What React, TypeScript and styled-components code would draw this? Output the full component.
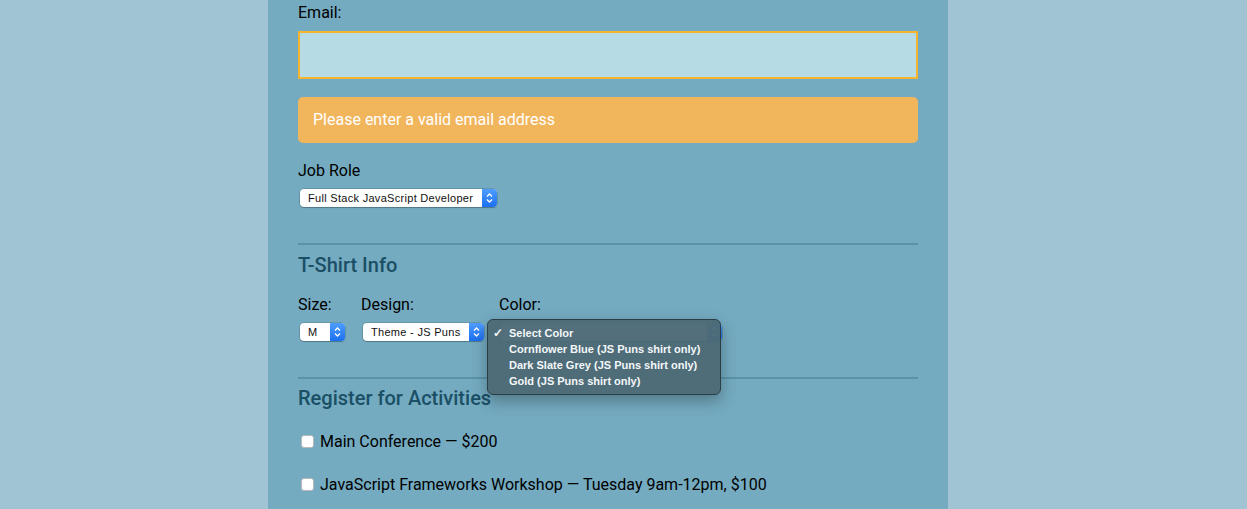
import React from 'react';
import styled, { createGlobalStyle } from 'styled-components';

const GlobalStyle = createGlobalStyle`
  html, body {
    margin: 0;
    padding: 0;
    background-color: #a0c4d4;
    font-family: 'Roboto', 'Liberation Sans', Arial, sans-serif;
  }
`;

const Page = styled.div`
  display: flex;
  justify-content: center;
  padding-right: 31px;
  min-height: 509px;
  overflow: hidden;
`;

const Form = styled.form`
  width: 620px;
  padding: 3px 30px 0;
  background-color: #74abc0;
  min-height: 506px;
`;

const Label = styled.label<{ gap?: number }>`
  display: block;
  margin-top: ${p => p.gap || 0}px;
  font-size: 16px;
  line-height: 19px;
  color: #000;
`;

const EmailInput = styled.input`
  display: block;
  box-sizing: border-box;
  width: 100%;
  height: 48px;
  margin: 9px 0 18px;
  background-color: #b6dbe5;
  border: 2px solid #f5b42e;
  outline: none;
`;

const Alert = styled.div`
  height: 46px;
  line-height: 46px;
  padding: 0 15px;
  border-radius: 5px;
  background-color: #f1b55c;
  color: #fff;
  font-size: 16px;
`;

const Divider = styled.hr<{ top: number }>`
  border: none;
  height: 2px;
  background-color: #5a93a8;
  margin: ${p => p.top}px 0 0;
`;

const Heading = styled.h2<{ gap: number }>`
  margin: ${p => p.gap}px 0 0;
  font-size: 20px;
  line-height: 24px;
  font-weight: 500;
  color: #1b4f66;
`;

const SelectBox = styled.div<{ width: number }>`
  display: flex;
  align-items: center;
  box-sizing: border-box;
  width: ${p => p.width}px;
  height: 18px;
  margin: 9px 0 0 2px;
  background: #fff;
  border-radius: 4px;
  box-shadow: 0 0 0 0.5px rgba(0, 0, 0, 0.25), 0 1px 1px rgba(0, 0, 0, 0.2);
  font-family: 'Liberation Sans', Arial, sans-serif;
  font-size: 11px;
  letter-spacing: 0.3px;
  color: #111;
  overflow: hidden;
`;

const SelectText = styled.span`
  flex: 1;
  padding-left: 8px;
  white-space: nowrap;
`;

const ArrowBox = styled.span`
  display: flex;
  align-items: center;
  justify-content: center;
  width: 15px;
  height: 100%;
  background: linear-gradient(#4f9dff, #1a6ff0);
`;

const ShirtRow = styled.div`
  display: grid;
  grid-template-columns: 63px 138px 1fr;
  margin-top: 18px;
`;

const Column = styled.div`
  position: relative;
`;

const Menu = styled.div`
  position: absolute;
  left: -12px;
  top: 24px;
  width: 232px;
  padding: 5px 0;
  background-color: rgba(76, 106, 119, 0.97);
  border: 1px solid #2b3d46;
  border-radius: 6px;
  box-shadow: 0 6px 16px rgba(0, 0, 0, 0.3);
  font-family: 'Liberation Sans', Arial, sans-serif;
  font-size: 11px;
  font-weight: 700;
  color: #f4f7f8;
  z-index: 2;
`;

const MenuItem = styled.div`
  display: flex;
  height: 16px;
  line-height: 16px;
  white-space: nowrap;
`;

const Check = styled.span`
  width: 21px;
  padding-left: 5px;
  box-sizing: border-box;
  font-size: 12px;
`;

const Activity = styled.label<{ gap: number }>`
  display: flex;
  align-items: center;
  gap: 6px;
  margin-top: ${p => p.gap}px;
  font-size: 16px;
  line-height: 19px;
`;

const CheckBox = styled.input`
  appearance: none;
  width: 13px;
  height: 13px;
  margin: 0 0 0 3px;
  background: #fff;
  border: 1px solid #b9b9b9;
  border-radius: 3px;
`;

const Chevrons = () => (
  <svg width="7" height="10" viewBox="0 0 7 10">
    <path d="M1 3.5 L3.5 1 L6 3.5 M1 6.5 L3.5 9 L6 6.5" fill="none" stroke="#fff" strokeWidth="1.3" />
  </svg>
);

const FakeSelect = ({ value, width }: { value: string; width: number }) => (
  <SelectBox width={width}>
    <SelectText>{value}</SelectText>
    <ArrowBox><Chevrons /></ArrowBox>
  </SelectBox>
);

const colors = [
  'Select Color',
  'Cornflower Blue (JS Puns shirt only)',
  'Dark Slate Grey (JS Puns shirt only)',
  'Gold (JS Puns shirt only)',
];

const App: React.FC = () => {
  return (
    <Page>
      <GlobalStyle />
      <Form>
        <Label>Email:</Label>
        <EmailInput type="email" />
        <Alert>Please enter a valid email address</Alert>

        <Label gap={18}>Job Role</Label>
        <FakeSelect value="Full Stack JavaScript Developer" width={197} />

        <Divider top={36} />
        <Heading gap={8}>T-Shirt Info</Heading>

        <ShirtRow>
          <Column>
            <Label>Size:</Label>
            <FakeSelect value="M" width={45} />
          </Column>
          <Column>
            <Label>Design:</Label>
            <FakeSelect value="Theme - JS Puns" width={121} />
          </Column>
          <Column>
            <Label>Color:</Label>
            {/* the open menu covers the selected value */}
            <FakeSelect value="" width={221} />
            <Menu>
              {colors.map((c, i) => (
                <MenuItem key={c}>
                  <Check>{i === 0 ? '✓' : ''}</Check>
                  {c}
                </MenuItem>
              ))}
            </Menu>
          </Column>
        </ShirtRow>

        <Divider top={36} />
        <Heading gap={7}>Register for Activities</Heading>

        <Activity gap={22}>
          <CheckBox type="checkbox" />
          Main Conference — $200
        </Activity>
        <Activity gap={24}>
          <CheckBox type="checkbox" />
          JavaScript Frameworks Workshop — Tuesday 9am-12pm, $100
        </Activity>
      </Form>
    </Page>
  );
};

export default App;
